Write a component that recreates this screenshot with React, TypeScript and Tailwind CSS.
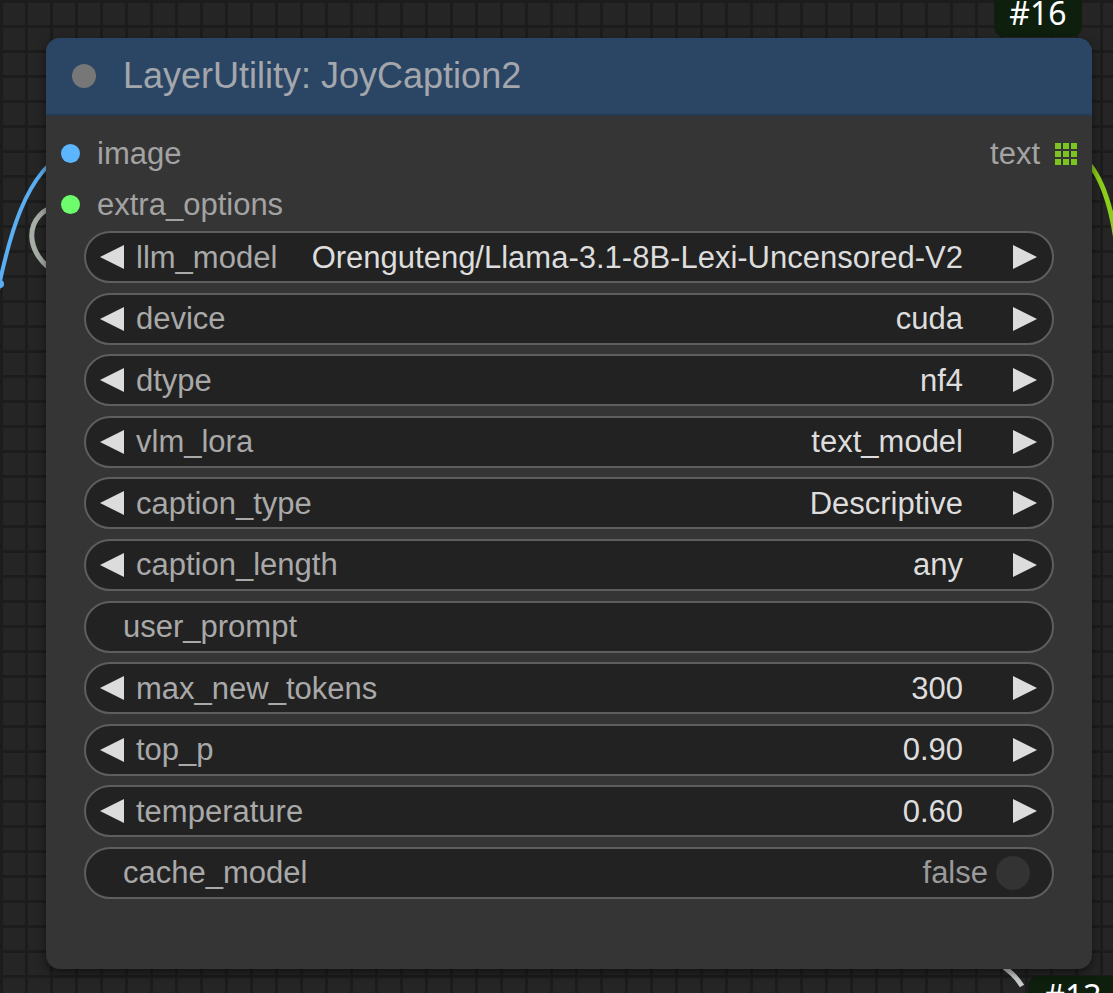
import React from "react";

const FONT = { fontFamily: '"Liberation Sans", Arial, sans-serif' } as const;

type Widget =
  | { kind: "combo"; label: string; value: string }
  | { kind: "text"; label: string }
  | { kind: "toggle"; label: string; value: string };

const WIDGETS: Widget[] = [
  { kind: "combo", label: "llm_model", value: "Orenguteng/Llama-3.1-8B-Lexi-Uncensored-V2" },
  { kind: "combo", label: "device", value: "cuda" },
  { kind: "combo", label: "dtype", value: "nf4" },
  { kind: "combo", label: "vlm_lora", value: "text_model" },
  { kind: "combo", label: "caption_type", value: "Descriptive" },
  { kind: "combo", label: "caption_length", value: "any" },
  { kind: "text", label: "user_prompt" },
  { kind: "combo", label: "max_new_tokens", value: "300" },
  { kind: "combo", label: "top_p", value: "0.90" },
  { kind: "combo", label: "temperature", value: "0.60" },
  { kind: "toggle", label: "cache_model", value: "false" },
];

function Arrow({ dir }: { dir: "left" | "right" }) {
  return (
    <svg width="25" height="24" viewBox="0 0 25 24" className="shrink-0">
      {dir === "left" ? (
        <polygon points="24,0 24,24 0,12" fill="#dcdcdc" />
      ) : (
        <polygon points="1,0 1,24 25,12" fill="#dcdcdc" />
      )}
    </svg>
  );
}

function WidgetRow({ w }: { w: Widget }) {
  return (
    <div className="flex h-[52px] items-center rounded-full border-2 border-[#5e5e5e] bg-[#222222] text-[31px] leading-none">
      {w.kind === "combo" && (
        <>
          <div className="ml-[14px] mr-[11px]">
            <Arrow dir="left" />
          </div>
          <span className="text-[#a9a9a9]">{w.label}</span>
          <span className="ml-auto text-[#dddddd]">{w.value}</span>
          <div className="ml-[49px] mr-[15px]">
            <Arrow dir="right" />
          </div>
        </>
      )}
      {w.kind === "text" && <span className="ml-[37px] text-[#a9a9a9]">{w.label}</span>}
      {w.kind === "toggle" && (
        <>
          <span className="ml-[37px] text-[#a9a9a9]">{w.label}</span>
          <span className="ml-auto text-[#9a9a9a]">{w.value}</span>
          <div className="ml-[8px] mr-[22px] h-[34px] w-[34px] rounded-full bg-[#333333]" />
        </>
      )}
    </div>
  );
}

function GridIcon() {
  return (
    <div className="grid grid-cols-3 gap-[2px]">
      {Array.from({ length: 9 }).map((_, i) => (
        <div key={i} className="h-[6px] w-[6px] bg-[#7cc41f]" />
      ))}
    </div>
  );
}

export default function App() {
  return (
    <div
      className="relative h-[993px] w-[1113px] overflow-hidden bg-[#252525] bg-[linear-gradient(to_right,#1c1c1c_3px,transparent_3px),linear-gradient(to_bottom,#1c1c1c_3px,transparent_3px)] bg-[size:25px_25px] pt-[38px] pl-[46px]"
      style={FONT}
    >
      {/* wires */}
      <svg className="absolute inset-0" width="1113" height="993">
        <path d="M -4 300 C 8 240, 25 170, 70 150" stroke="#5aaef2" strokeWidth="4" fill="none" />
        <circle cx="0" cy="284" r="4" fill="#5aaef2" />
        <path d="M 60 275 C 22 255, 22 212, 62 204" stroke="#a6aea6" strokeWidth="5" fill="none" />
        <path d="M 1070 150 C 1098 160, 1110 200, 1116 240" stroke="#8ccc1c" strokeWidth="5" fill="none" />
        <path d="M 1000 964 C 1008 970, 1016 976, 1022 986" stroke="#c8ccc8" strokeWidth="5" fill="none" />
      </svg>

      {/* badges */}
      <div
        className="absolute left-[994px] top-[-14px] flex h-[51px] w-[88px] items-end justify-center rounded-[10px] bg-[#0e1f0e] pb-[8px] text-[32px] leading-none text-white"
        style={{ fontFamily: '"Noto Sans", sans-serif' }}
      >
        #16
      </div>
      <div
        className="absolute left-[1028px] top-[976px] flex h-[40px] w-[90px] items-start justify-center rounded-[10px] bg-[#0e1f0e] pt-[4px] text-[32px] leading-none text-white"
        style={{ fontFamily: '"Noto Sans", sans-serif' }}
      >
        #13
      </div>

      {/* node */}
      <div className="relative flex h-[931px] w-[1046px] flex-col overflow-hidden rounded-[14px] bg-[#353535] shadow-[0_4px_10px_rgba(0,0,0,0.5)]">
        <div className="flex h-[78px] shrink-0 items-center border-b-2 border-[#263a52] bg-[#2b4565]">
          <div className="ml-[26px] h-[24px] w-[24px] rounded-full bg-[#777777]" />
          <span className="ml-[27px] text-[36px] leading-none text-[#a3a7ac]">LayerUtility: JoyCaption2</span>
        </div>

        <div className="flex flex-col px-[38px] pt-[12px]">
          <div className="-mx-[23px] flex h-[51px] items-center text-[31px] leading-none text-[#a3a3a3]">
            <div className="h-[19px] w-[19px] rounded-full bg-[#5cb6ff]" />
            <span className="ml-[17px]">image</span>
            <span className="ml-auto">text</span>
            <div className="ml-[15px]">
              <GridIcon />
            </div>
          </div>
          <div className="-mx-[23px] flex h-[51px] items-center text-[31px] leading-none text-[#a3a3a3]">
            <div className="h-[19px] w-[19px] rounded-full bg-[#6dfc6b]" />
            <span className="ml-[17px]">extra_options</span>
          </div>

          <div className="mt-[1px] flex flex-col gap-[9.6px]">
            {WIDGETS.map((w) => (
              <WidgetRow key={w.label} w={w} />
            ))}
          </div>
        </div>
      </div>
    </div>
  );
}
